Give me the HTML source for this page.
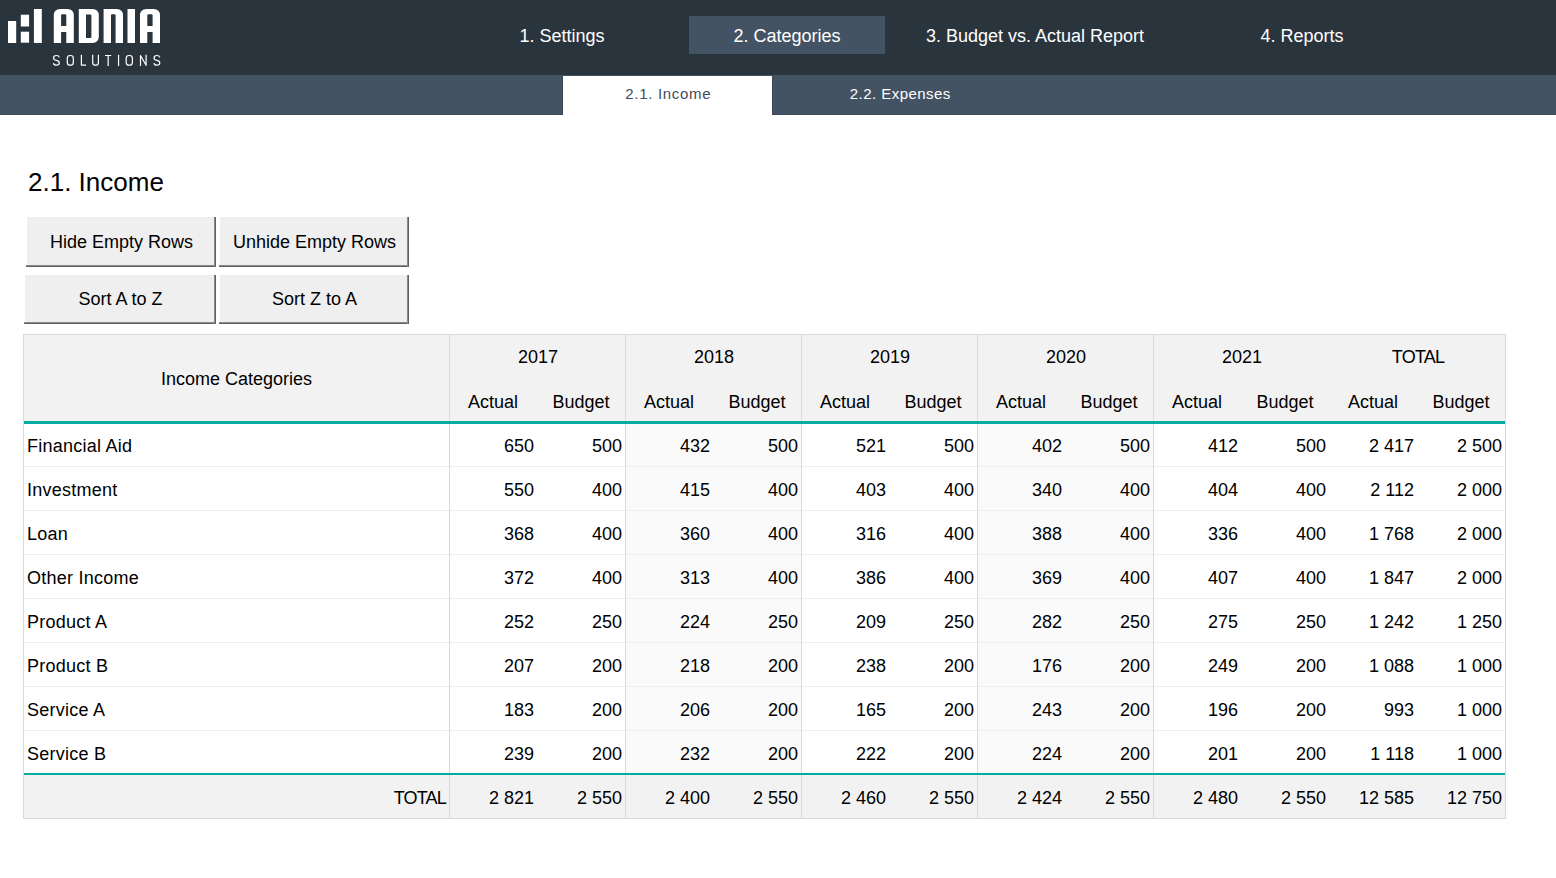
<!DOCTYPE html>
<html><head><meta charset="utf-8"><title>2.1. Income</title>
<style>
html,body{margin:0;padding:0;background:#fff;width:1556px;height:878px;overflow:hidden;position:relative}
.r{position:absolute}
.t{position:absolute;font-family:'Liberation Sans', sans-serif;line-height:20px;white-space:nowrap}
.c{text-align:center}
</style></head><body>
<div class="r" style="left:0px;top:0px;width:1556px;height:75px;background:#2a343d;"></div>
<div class="r" style="left:0px;top:75px;width:1556px;height:40px;background:#435363;"></div>
<div class="r" style="left:689px;top:16px;width:196px;height:38px;background:#435363;"></div>
<div class="r" style="left:563px;top:76px;width:209px;height:39px;background:#ffffff;"></div>
<div class="r" style="left:0px;top:114px;width:563px;height:1px;background:#3b4856;"></div>
<div class="r" style="left:562px;top:75px;width:1px;height:40px;background:#3b4856;"></div>
<div class="r" style="left:772px;top:75px;width:1px;height:40px;background:#3b4856;"></div>
<div class="r" style="left:773px;top:114px;width:783px;height:1px;background:#3b4856;"></div>
<div class="t c" style="left:262px;width:600px;top:25.76px;font-size:18px;color:#fff;">1. Settings</div>
<div class="t c" style="left:487px;width:600px;top:25.76px;font-size:18px;color:#fff;">2. Categories</div>
<div class="t c" style="left:735px;width:600px;top:25.76px;font-size:18px;color:#fff;">3. Budget vs. Actual Report</div>
<div class="t c" style="left:1002px;width:600px;top:25.76px;font-size:18px;color:#fff;">4. Reports</div>
<div class="t c" style="left:368.29999999999995px;width:600px;top:84.30px;font-size:15px;color:#3f4c5a;letter-spacing:0.7px">2.1. Income</div>
<div class="t c" style="left:600.3px;width:600px;top:84.30px;font-size:15px;color:#fff;letter-spacing:0.45px">2.2. Expenses</div>
<svg class="r" style="left:0;top:0" width="170" height="75" viewBox="0 0 170 75">
<g fill="#fff">
<rect x="8" y="21" width="8.2" height="22"/>
<rect x="20.8" y="14.7" width="8.3" height="11.8"/>
<rect x="20.8" y="31.7" width="8.3" height="11"/>
<rect x="33.9" y="9" width="7.9" height="34"/>
<path d="M53.8 43 V15.5 Q53.8 9 60.3 9 H67.3 Q73.8 9 73.8 15.5 V43 H66.3 V32 H61.1 V43 Z M61.1 26.1 H66.3 V15.2 Q66.3 14.2 65.3 14.2 H62.1 Q61.1 14.2 61.1 15.2 Z" fill-rule="evenodd"/>
<path d="M78.8 43 V9 H92.3 Q98.8 9 98.8 15.5 V36.5 Q98.8 43 92.3 43 Z M86 37.9 H90.4 Q91.4 37.9 91.4 36.9 V15.6 Q91.4 14.6 90.4 14.6 H86 Z" fill-rule="evenodd"/>
<path d="M103.6 43 V9 H116.5 Q123 9 123 15.5 V43 H115.6 V15.2 Q115.6 14.2 114.6 14.2 H112 Q111 14.2 111 15.2 V43 Z"/>
<rect x="127.5" y="9" width="7.5" height="34"/>
<path d="M140 43 V15.5 Q140 9 146.5 9 H153.5 Q160 9 160 15.5 V43 H152.6 V32 H147.3 V43 Z M147.3 26.1 H152.6 V15.2 Q152.6 14.2 151.6 14.2 H148.3 Q147.3 14.2 147.3 15.2 Z" fill-rule="evenodd"/>
</g>
<g fill="none" stroke="#fff" stroke-width="1.2" stroke-linejoin="round">
<path d="M59.3 57.4 Q58.9 55.5 56.4 55.5 Q53.5 55.5 53.5 58 Q53.5 59.9 56.4 60.4 Q59.3 60.9 59.3 63.1 Q59.3 65.2 56.4 65.2 Q53.8 65.2 53.5 63.1"/>
<rect x="67.3" y="55.5" width="6" height="9.7" rx="2.8"/>
<path d="M81.4 54.8 V65.2 H86.1"/>
<path d="M92.7 54.8 V62.4 Q92.7 65.2 95.55 65.2 Q98.4 65.2 98.4 62.4 V54.8"/>
<path d="M105 55.5 H111.3 M108.15 55.5 V65.9"/>
<path d="M118.55 54.8 V65.9"/>
<rect x="126.2" y="55.5" width="6.2" height="9.7" rx="2.8"/>
<path d="M140.5 65.9 V55.5 L146.1 65.2 V54.8"/>
<path d="M159.8 57.4 Q159.4 55.5 156.9 55.5 Q154 55.5 154 58 Q154 59.9 156.9 60.4 Q159.8 60.9 159.8 63.1 Q159.8 65.2 156.9 65.2 Q154.3 65.2 154 63.1"/>
</g>
</svg>
<div class="t" style="left:28px;top:171.99px;font-size:26px;color:#000;">2.1. Income</div>
<div class="r" style="left:27px;top:217px;width:189px;height:50px;background:#efefef;"></div><div class="r" style="left:26px;top:265px;width:190px;height:1px;background:#8a8a8a;"></div><div class="r" style="left:26px;top:266px;width:190px;height:1px;background:#606060;"></div><div class="r" style="left:214px;top:217px;width:1px;height:50px;background:#8a8a8a;"></div><div class="r" style="left:215px;top:217px;width:1px;height:50px;background:#606060;"></div><div class="t c" style="left:-178.5px;width:600px;top:231.76px;font-size:18px;color:#000;">Hide Empty Rows</div>
<div class="r" style="left:220px;top:217px;width:189px;height:50px;background:#efefef;"></div><div class="r" style="left:219px;top:265px;width:190px;height:1px;background:#8a8a8a;"></div><div class="r" style="left:219px;top:266px;width:190px;height:1px;background:#606060;"></div><div class="r" style="left:407px;top:217px;width:1px;height:50px;background:#8a8a8a;"></div><div class="r" style="left:408px;top:217px;width:1px;height:50px;background:#606060;"></div><div class="t c" style="left:14.5px;width:600px;top:231.76px;font-size:18px;color:#000;">Unhide Empty Rows</div>
<div class="r" style="left:25px;top:275px;width:191px;height:49px;background:#efefef;"></div><div class="r" style="left:24px;top:322px;width:192px;height:1px;background:#8a8a8a;"></div><div class="r" style="left:24px;top:323px;width:192px;height:1px;background:#606060;"></div><div class="r" style="left:214px;top:275px;width:1px;height:49px;background:#8a8a8a;"></div><div class="r" style="left:215px;top:275px;width:1px;height:49px;background:#606060;"></div><div class="t c" style="left:-179.5px;width:600px;top:288.76px;font-size:18px;color:#000;">Sort A to Z</div>
<div class="r" style="left:220px;top:275px;width:189px;height:49px;background:#efefef;"></div><div class="r" style="left:219px;top:322px;width:190px;height:1px;background:#8a8a8a;"></div><div class="r" style="left:219px;top:323px;width:190px;height:1px;background:#606060;"></div><div class="r" style="left:407px;top:275px;width:1px;height:49px;background:#8a8a8a;"></div><div class="r" style="left:408px;top:275px;width:1px;height:49px;background:#606060;"></div><div class="t c" style="left:14.5px;width:600px;top:288.76px;font-size:18px;color:#000;">Sort Z to A</div>
<div class="r" style="left:23px;top:334px;width:1483px;height:485px;background:#ffffff;"></div>
<div class="r" style="left:23px;top:334px;width:1483px;height:87px;background:#f2f2f2;"></div>
<div class="r" style="left:23px;top:775px;width:1483px;height:43px;background:#f2f2f2;"></div>
<div class="r" style="left:626px;top:424px;width:175px;height:349px;background:#fafafa;"></div>
<div class="r" style="left:978px;top:424px;width:175px;height:349px;background:#fafafa;"></div>
<div class="r" style="left:23px;top:466px;width:1482px;height:1px;background:#efefef;"></div>
<div class="r" style="left:23px;top:510px;width:1482px;height:1px;background:#efefef;"></div>
<div class="r" style="left:23px;top:554px;width:1482px;height:1px;background:#efefef;"></div>
<div class="r" style="left:23px;top:598px;width:1482px;height:1px;background:#efefef;"></div>
<div class="r" style="left:23px;top:642px;width:1482px;height:1px;background:#efefef;"></div>
<div class="r" style="left:23px;top:686px;width:1482px;height:1px;background:#efefef;"></div>
<div class="r" style="left:23px;top:730px;width:1482px;height:1px;background:#efefef;"></div>
<div class="r" style="left:23px;top:421px;width:1483px;height:3px;background:#03aca0;"></div>
<div class="r" style="left:23px;top:773px;width:1483px;height:2px;background:#03aca0;"></div>
<div class="r" style="left:23px;top:334px;width:1483px;height:1px;background:#d9d9d9;"></div>
<div class="r" style="left:23px;top:818px;width:1483px;height:1px;background:#d9d9d9;"></div>
<div class="r" style="left:23px;top:334px;width:1px;height:485px;background:#d9d9d9;"></div>
<div class="r" style="left:1505px;top:334px;width:1px;height:485px;background:#d9d9d9;"></div>
<div class="r" style="left:449px;top:335px;width:1px;height:86px;background:#d9d9d9;"></div>
<div class="r" style="left:449px;top:424px;width:1px;height:349px;background:#d9d9d9;"></div>
<div class="r" style="left:449px;top:775px;width:1px;height:43px;background:#d9d9d9;"></div>
<div class="r" style="left:625px;top:335px;width:1px;height:86px;background:#d9d9d9;"></div>
<div class="r" style="left:625px;top:424px;width:1px;height:349px;background:#d9d9d9;"></div>
<div class="r" style="left:625px;top:775px;width:1px;height:43px;background:#d9d9d9;"></div>
<div class="r" style="left:801px;top:335px;width:1px;height:86px;background:#d9d9d9;"></div>
<div class="r" style="left:801px;top:424px;width:1px;height:349px;background:#d9d9d9;"></div>
<div class="r" style="left:801px;top:775px;width:1px;height:43px;background:#d9d9d9;"></div>
<div class="r" style="left:977px;top:335px;width:1px;height:86px;background:#d9d9d9;"></div>
<div class="r" style="left:977px;top:424px;width:1px;height:349px;background:#d9d9d9;"></div>
<div class="r" style="left:977px;top:775px;width:1px;height:43px;background:#d9d9d9;"></div>
<div class="r" style="left:1153px;top:335px;width:1px;height:86px;background:#d9d9d9;"></div>
<div class="r" style="left:1153px;top:424px;width:1px;height:349px;background:#d9d9d9;"></div>
<div class="r" style="left:1153px;top:775px;width:1px;height:43px;background:#d9d9d9;"></div>
<div class="t c" style="left:-63.5px;width:600px;top:368.76px;font-size:18px;color:#000;">Income Categories</div>
<div class="t c" style="left:238px;width:600px;top:346.76px;font-size:18px;color:#000;">2017</div>
<div class="t c" style="left:193px;width:600px;top:391.76px;font-size:18px;color:#000;">Actual</div>
<div class="t c" style="left:281px;width:600px;top:391.76px;font-size:18px;color:#000;">Budget</div>
<div class="t c" style="left:414px;width:600px;top:346.76px;font-size:18px;color:#000;">2018</div>
<div class="t c" style="left:369px;width:600px;top:391.76px;font-size:18px;color:#000;">Actual</div>
<div class="t c" style="left:457px;width:600px;top:391.76px;font-size:18px;color:#000;">Budget</div>
<div class="t c" style="left:590px;width:600px;top:346.76px;font-size:18px;color:#000;">2019</div>
<div class="t c" style="left:545px;width:600px;top:391.76px;font-size:18px;color:#000;">Actual</div>
<div class="t c" style="left:633px;width:600px;top:391.76px;font-size:18px;color:#000;">Budget</div>
<div class="t c" style="left:766px;width:600px;top:346.76px;font-size:18px;color:#000;">2020</div>
<div class="t c" style="left:721px;width:600px;top:391.76px;font-size:18px;color:#000;">Actual</div>
<div class="t c" style="left:809px;width:600px;top:391.76px;font-size:18px;color:#000;">Budget</div>
<div class="t c" style="left:942px;width:600px;top:346.76px;font-size:18px;color:#000;">2021</div>
<div class="t c" style="left:897px;width:600px;top:391.76px;font-size:18px;color:#000;">Actual</div>
<div class="t c" style="left:985px;width:600px;top:391.76px;font-size:18px;color:#000;">Budget</div>
<div class="t c" style="left:1118px;width:600px;top:346.76px;font-size:18px;color:#000;letter-spacing:-0.8px">TOTAL</div>
<div class="t c" style="left:1073px;width:600px;top:391.76px;font-size:18px;color:#000;">Actual</div>
<div class="t c" style="left:1161px;width:600px;top:391.76px;font-size:18px;color:#000;">Budget</div>
<div class="t" style="left:27px;top:435.76px;font-size:18px;color:#000;letter-spacing:0.25px">Financial Aid</div>
<div class="t" style="right:1022px;top:435.76px;font-size:18px;color:#000;">650</div>
<div class="t" style="right:934px;top:435.76px;font-size:18px;color:#000;">500</div>
<div class="t" style="right:846px;top:435.76px;font-size:18px;color:#000;">432</div>
<div class="t" style="right:758px;top:435.76px;font-size:18px;color:#000;">500</div>
<div class="t" style="right:670px;top:435.76px;font-size:18px;color:#000;">521</div>
<div class="t" style="right:582px;top:435.76px;font-size:18px;color:#000;">500</div>
<div class="t" style="right:494px;top:435.76px;font-size:18px;color:#000;">402</div>
<div class="t" style="right:406px;top:435.76px;font-size:18px;color:#000;">500</div>
<div class="t" style="right:318px;top:435.76px;font-size:18px;color:#000;">412</div>
<div class="t" style="right:230px;top:435.76px;font-size:18px;color:#000;">500</div>
<div class="t" style="right:142px;top:435.76px;font-size:18px;color:#000;">2 417</div>
<div class="t" style="right:54px;top:435.76px;font-size:18px;color:#000;">2 500</div>
<div class="t" style="left:27px;top:479.76px;font-size:18px;color:#000;letter-spacing:0.25px">Investment</div>
<div class="t" style="right:1022px;top:479.76px;font-size:18px;color:#000;">550</div>
<div class="t" style="right:934px;top:479.76px;font-size:18px;color:#000;">400</div>
<div class="t" style="right:846px;top:479.76px;font-size:18px;color:#000;">415</div>
<div class="t" style="right:758px;top:479.76px;font-size:18px;color:#000;">400</div>
<div class="t" style="right:670px;top:479.76px;font-size:18px;color:#000;">403</div>
<div class="t" style="right:582px;top:479.76px;font-size:18px;color:#000;">400</div>
<div class="t" style="right:494px;top:479.76px;font-size:18px;color:#000;">340</div>
<div class="t" style="right:406px;top:479.76px;font-size:18px;color:#000;">400</div>
<div class="t" style="right:318px;top:479.76px;font-size:18px;color:#000;">404</div>
<div class="t" style="right:230px;top:479.76px;font-size:18px;color:#000;">400</div>
<div class="t" style="right:142px;top:479.76px;font-size:18px;color:#000;">2 112</div>
<div class="t" style="right:54px;top:479.76px;font-size:18px;color:#000;">2 000</div>
<div class="t" style="left:27px;top:523.76px;font-size:18px;color:#000;letter-spacing:0.25px">Loan</div>
<div class="t" style="right:1022px;top:523.76px;font-size:18px;color:#000;">368</div>
<div class="t" style="right:934px;top:523.76px;font-size:18px;color:#000;">400</div>
<div class="t" style="right:846px;top:523.76px;font-size:18px;color:#000;">360</div>
<div class="t" style="right:758px;top:523.76px;font-size:18px;color:#000;">400</div>
<div class="t" style="right:670px;top:523.76px;font-size:18px;color:#000;">316</div>
<div class="t" style="right:582px;top:523.76px;font-size:18px;color:#000;">400</div>
<div class="t" style="right:494px;top:523.76px;font-size:18px;color:#000;">388</div>
<div class="t" style="right:406px;top:523.76px;font-size:18px;color:#000;">400</div>
<div class="t" style="right:318px;top:523.76px;font-size:18px;color:#000;">336</div>
<div class="t" style="right:230px;top:523.76px;font-size:18px;color:#000;">400</div>
<div class="t" style="right:142px;top:523.76px;font-size:18px;color:#000;">1 768</div>
<div class="t" style="right:54px;top:523.76px;font-size:18px;color:#000;">2 000</div>
<div class="t" style="left:27px;top:567.76px;font-size:18px;color:#000;letter-spacing:0.25px">Other Income</div>
<div class="t" style="right:1022px;top:567.76px;font-size:18px;color:#000;">372</div>
<div class="t" style="right:934px;top:567.76px;font-size:18px;color:#000;">400</div>
<div class="t" style="right:846px;top:567.76px;font-size:18px;color:#000;">313</div>
<div class="t" style="right:758px;top:567.76px;font-size:18px;color:#000;">400</div>
<div class="t" style="right:670px;top:567.76px;font-size:18px;color:#000;">386</div>
<div class="t" style="right:582px;top:567.76px;font-size:18px;color:#000;">400</div>
<div class="t" style="right:494px;top:567.76px;font-size:18px;color:#000;">369</div>
<div class="t" style="right:406px;top:567.76px;font-size:18px;color:#000;">400</div>
<div class="t" style="right:318px;top:567.76px;font-size:18px;color:#000;">407</div>
<div class="t" style="right:230px;top:567.76px;font-size:18px;color:#000;">400</div>
<div class="t" style="right:142px;top:567.76px;font-size:18px;color:#000;">1 847</div>
<div class="t" style="right:54px;top:567.76px;font-size:18px;color:#000;">2 000</div>
<div class="t" style="left:27px;top:611.76px;font-size:18px;color:#000;letter-spacing:0.25px">Product A</div>
<div class="t" style="right:1022px;top:611.76px;font-size:18px;color:#000;">252</div>
<div class="t" style="right:934px;top:611.76px;font-size:18px;color:#000;">250</div>
<div class="t" style="right:846px;top:611.76px;font-size:18px;color:#000;">224</div>
<div class="t" style="right:758px;top:611.76px;font-size:18px;color:#000;">250</div>
<div class="t" style="right:670px;top:611.76px;font-size:18px;color:#000;">209</div>
<div class="t" style="right:582px;top:611.76px;font-size:18px;color:#000;">250</div>
<div class="t" style="right:494px;top:611.76px;font-size:18px;color:#000;">282</div>
<div class="t" style="right:406px;top:611.76px;font-size:18px;color:#000;">250</div>
<div class="t" style="right:318px;top:611.76px;font-size:18px;color:#000;">275</div>
<div class="t" style="right:230px;top:611.76px;font-size:18px;color:#000;">250</div>
<div class="t" style="right:142px;top:611.76px;font-size:18px;color:#000;">1 242</div>
<div class="t" style="right:54px;top:611.76px;font-size:18px;color:#000;">1 250</div>
<div class="t" style="left:27px;top:655.76px;font-size:18px;color:#000;letter-spacing:0.25px">Product B</div>
<div class="t" style="right:1022px;top:655.76px;font-size:18px;color:#000;">207</div>
<div class="t" style="right:934px;top:655.76px;font-size:18px;color:#000;">200</div>
<div class="t" style="right:846px;top:655.76px;font-size:18px;color:#000;">218</div>
<div class="t" style="right:758px;top:655.76px;font-size:18px;color:#000;">200</div>
<div class="t" style="right:670px;top:655.76px;font-size:18px;color:#000;">238</div>
<div class="t" style="right:582px;top:655.76px;font-size:18px;color:#000;">200</div>
<div class="t" style="right:494px;top:655.76px;font-size:18px;color:#000;">176</div>
<div class="t" style="right:406px;top:655.76px;font-size:18px;color:#000;">200</div>
<div class="t" style="right:318px;top:655.76px;font-size:18px;color:#000;">249</div>
<div class="t" style="right:230px;top:655.76px;font-size:18px;color:#000;">200</div>
<div class="t" style="right:142px;top:655.76px;font-size:18px;color:#000;">1 088</div>
<div class="t" style="right:54px;top:655.76px;font-size:18px;color:#000;">1 000</div>
<div class="t" style="left:27px;top:699.76px;font-size:18px;color:#000;letter-spacing:0.25px">Service A</div>
<div class="t" style="right:1022px;top:699.76px;font-size:18px;color:#000;">183</div>
<div class="t" style="right:934px;top:699.76px;font-size:18px;color:#000;">200</div>
<div class="t" style="right:846px;top:699.76px;font-size:18px;color:#000;">206</div>
<div class="t" style="right:758px;top:699.76px;font-size:18px;color:#000;">200</div>
<div class="t" style="right:670px;top:699.76px;font-size:18px;color:#000;">165</div>
<div class="t" style="right:582px;top:699.76px;font-size:18px;color:#000;">200</div>
<div class="t" style="right:494px;top:699.76px;font-size:18px;color:#000;">243</div>
<div class="t" style="right:406px;top:699.76px;font-size:18px;color:#000;">200</div>
<div class="t" style="right:318px;top:699.76px;font-size:18px;color:#000;">196</div>
<div class="t" style="right:230px;top:699.76px;font-size:18px;color:#000;">200</div>
<div class="t" style="right:142px;top:699.76px;font-size:18px;color:#000;">993</div>
<div class="t" style="right:54px;top:699.76px;font-size:18px;color:#000;">1 000</div>
<div class="t" style="left:27px;top:743.76px;font-size:18px;color:#000;letter-spacing:0.25px">Service B</div>
<div class="t" style="right:1022px;top:743.76px;font-size:18px;color:#000;">239</div>
<div class="t" style="right:934px;top:743.76px;font-size:18px;color:#000;">200</div>
<div class="t" style="right:846px;top:743.76px;font-size:18px;color:#000;">232</div>
<div class="t" style="right:758px;top:743.76px;font-size:18px;color:#000;">200</div>
<div class="t" style="right:670px;top:743.76px;font-size:18px;color:#000;">222</div>
<div class="t" style="right:582px;top:743.76px;font-size:18px;color:#000;">200</div>
<div class="t" style="right:494px;top:743.76px;font-size:18px;color:#000;">224</div>
<div class="t" style="right:406px;top:743.76px;font-size:18px;color:#000;">200</div>
<div class="t" style="right:318px;top:743.76px;font-size:18px;color:#000;">201</div>
<div class="t" style="right:230px;top:743.76px;font-size:18px;color:#000;">200</div>
<div class="t" style="right:142px;top:743.76px;font-size:18px;color:#000;">1 118</div>
<div class="t" style="right:54px;top:743.76px;font-size:18px;color:#000;">1 000</div>
<div class="t" style="right:1110px;top:787.76px;font-size:18px;color:#000;letter-spacing:-0.8px">TOTAL</div>
<div class="t" style="right:1022px;top:787.76px;font-size:18px;color:#000;">2 821</div>
<div class="t" style="right:934px;top:787.76px;font-size:18px;color:#000;">2 550</div>
<div class="t" style="right:846px;top:787.76px;font-size:18px;color:#000;">2 400</div>
<div class="t" style="right:758px;top:787.76px;font-size:18px;color:#000;">2 550</div>
<div class="t" style="right:670px;top:787.76px;font-size:18px;color:#000;">2 460</div>
<div class="t" style="right:582px;top:787.76px;font-size:18px;color:#000;">2 550</div>
<div class="t" style="right:494px;top:787.76px;font-size:18px;color:#000;">2 424</div>
<div class="t" style="right:406px;top:787.76px;font-size:18px;color:#000;">2 550</div>
<div class="t" style="right:318px;top:787.76px;font-size:18px;color:#000;">2 480</div>
<div class="t" style="right:230px;top:787.76px;font-size:18px;color:#000;">2 550</div>
<div class="t" style="right:142px;top:787.76px;font-size:18px;color:#000;">12 585</div>
<div class="t" style="right:54px;top:787.76px;font-size:18px;color:#000;">12 750</div>
</body></html>
